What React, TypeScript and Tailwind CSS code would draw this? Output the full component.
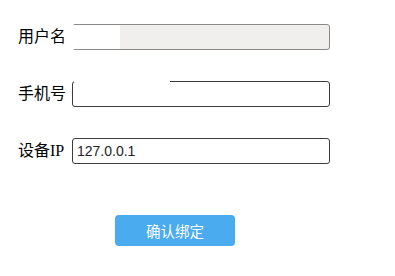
import React from "react"

const labelCls =
  "w-[54px] shrink-0 text-[16px] leading-none text-black [font-family:'Liberation_Serif','Noto_Sans_CJK_SC',serif]"
const inputCls =
  "block box-border h-[26px] w-[258px] rounded-[3px] border px-[4px] text-[14px] text-[#222] outline-none [font-family:'Liberation_Sans','Noto_Sans_CJK_SC',sans-serif]"

export default function App() {
  return (
    <div className="h-[276px] w-[395px] bg-white pl-[18px] pt-[24px]">
      <div className="flex items-center">
        <span className={labelCls}>用户名</span>
        <div className="relative flex">
          <input
            disabled
            className={`${inputCls} border-[#8a8986] bg-[#f0efed]`}
          />
          <div className="absolute left-0 top-[1px] bottom-[1px] w-[48px] bg-white" />
        </div>
      </div>

      <div className="mt-[31px] flex items-center">
        <span className={labelCls}>手机号</span>
        <div className="relative flex">
          <input className={`${inputCls} border-[#3c3c3c] bg-white`} />
          <div className="absolute left-[2px] top-0 h-[1px] w-[96px] bg-white" />
        </div>
      </div>

      <div className="mt-[31px] flex items-center">
        <span className={labelCls}>设备IP</span>
        <input
          defaultValue="127.0.0.1"
          className={`${inputCls} border-[#3c3c3c] bg-white`}
        />
      </div>

      <div className="mt-[51px] pl-[97px]">
        <button className="block h-[31px] w-[120px] rounded-[4px] bg-[#4aabef] text-[14.5px] text-white [font-family:'Noto_Sans_CJK_SC',sans-serif]">
          确认绑定
        </button>
      </div>
    </div>
  )
}
